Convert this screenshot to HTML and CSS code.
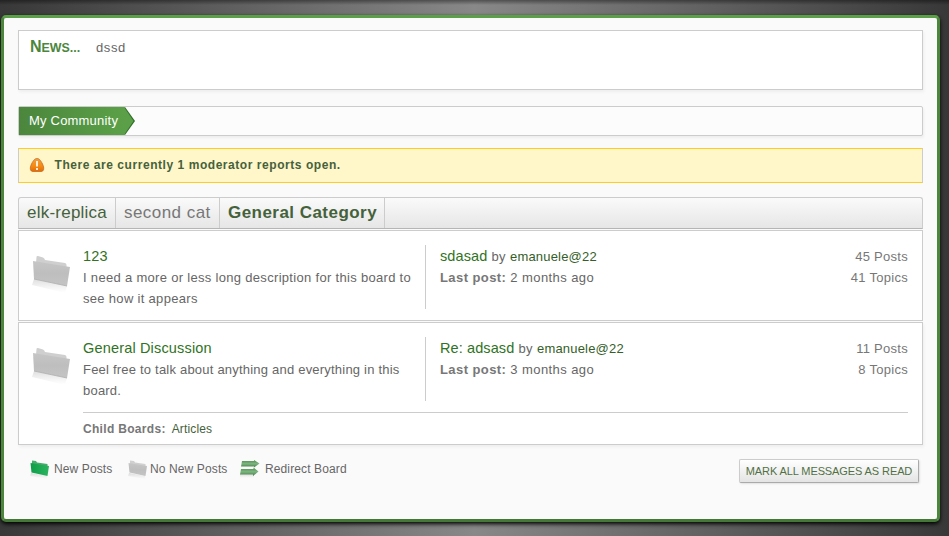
FILE: index.html
```html
<!DOCTYPE html>
<html lang="en">
<head>
<meta charset="utf-8">
<title>My Community</title>
<link rel="stylesheet" href="styles.css">
</head>
<body>
<svg class="defs" width="0" height="0" aria-hidden="true">
  <defs>
    <linearGradient id="gray" x1="0" y1="0" x2="0" y2="1"><stop offset="0" stop-color="#c6c6c6"/><stop offset=".5" stop-color="#bebebe"/><stop offset="1" stop-color="#c4c4c4"/></linearGradient>
    <linearGradient id="fade" x1="0" y1="0" x2="0" y2="1"><stop offset="0" stop-color="#aaa" stop-opacity=".4"/><stop offset="1" stop-color="#ccc" stop-opacity="0"/></linearGradient>
    <linearGradient id="green" x1="0" y1="0" x2="1" y2="0"><stop offset="0" stop-color="#0d9d48"/><stop offset="1" stop-color="#2db560"/></linearGradient>
    <linearGradient id="arrow" x1="0" y1="0" x2="0" y2="1"><stop offset="0" stop-color="#4d8a50"/><stop offset=".5" stop-color="#7db680"/><stop offset="1" stop-color="#437b47"/></linearGradient>
    <linearGradient id="orange" x1="0" y1="0" x2="0" y2="1"><stop offset="0" stop-color="#f0a040"/><stop offset=".6" stop-color="#f58a10"/><stop offset="1" stop-color="#e06a08"/></linearGradient>
    <symbol id="folder" viewBox="0 0 40 40">
      <path d="M2 24L35 31L33 38L0 30Z" fill="url(#fade)"/>
      <path d="M4 8L4.500 2Q4.500 .8 6 1L11 2.500Q12.500 3 13 5L33 8Q34.500 8.300 34.500 10V15H4Z" fill="#cfcfcf"/>
      <path d="M1 6L38 12L35 31L2 24Z" fill="url(#gray)"/>
      <path d="M2 24L35 31" stroke="#adadad" stroke-width=".8" fill="none"/>
    </symbol>
  </defs>
</svg>
<main class="wrapper">
  <section class="news"><h2>News...</h2><p>dssd</p></section>
  <nav class="crumbs">
    <a>My Community</a>
    <svg width="11" height="28" viewBox="0 0 11 28"><path d="M0 0L10 14L0 28Z" fill="#306e28"/><path d="M0 1.500L8.500 14L0 26.500Z" fill="#5ba048"/></svg>
  </nav>
  <div class="warning">
    <svg width="16" height="16" viewBox="0 0 16 16"><path d="M8 1.500C10 1.500 11.500 3 13.500 7C15.500 11 15 14.500 12 14.500H4C1 14.500 .5 11 2.500 7C4.500 3 6 1.500 8 1.500Z" fill="url(#orange)" stroke="#c66a24" stroke-width=".8"/><path d="M8 4V9.500M8 11V13" stroke="#fff" stroke-width="1.700"/></svg>
    <span>There are currently 1 moderator reports open.</span>
  </div>
  <ul class="tabs"><li>elk-replica</li><li class="muted">second cat</li><li class="active">General Category</li></ul>
  <article class="board">
    <svg class="icon" width="40" height="40"><use href="#folder"/></svg>
    <div class="info"><h3>123</h3><p>I need a more or less long description for this board to<br>see how it appears</p></div>
    <div class="latest"><p><a class="topic">sdasad</a> by <a>emanuele@22</a></p><p><b>Last post:</b> 2 months ago</p></div>
    <div class="stats"><p>45 Posts</p><p>41 Topics</p></div>
  </article>
  <article class="board second">
    <svg class="icon" width="40" height="40"><use href="#folder"/></svg>
    <div class="info"><h3>General Discussion</h3><p>Feel free to talk about anything and everything in this<br>board.</p></div>
    <div class="latest"><p><a class="topic">Re: adsasd</a> by <a>emanuele@22</a></p><p><b>Last post:</b> 3 months ago</p></div>
    <div class="stats"><p>11 Posts</p><p>8 Topics</p></div>
    <div class="children"><b>Child Boards:</b><a>Articles</a></div>
  </article>
  <footer class="legend">
    <svg class="i1" width="20" height="20" viewBox="0 0 20 20"><path d="M1 14L17 17V20L0 17Z" fill="url(#fade)"/><path d="M2 7V1.500L6 2L7 3.500L17.500 5V9Z" fill="#45ac6c"/><path d="M.5 4L19 7L17.500 17L1.500 13.500Z" fill="url(#green)"/></svg>
    <span class="l1">New Posts</span>
    <svg class="i2" width="20" height="20" viewBox="0 0 20 20"><path d="M1 14L17 17V20L0 17Z" fill="url(#fade)"/><path d="M2 7V1.500L6 2L7 3.500L17.500 5V9Z" fill="#d0d0d0"/><path d="M.5 4L19 7L17.500 17L1.500 13.500Z" fill="url(#gray)"/></svg>
    <span class="l2">No New Posts</span>
    <svg class="i3" width="20" height="20" viewBox="0 0 20 20"><path d="M0 15H14V19H0Z" fill="url(#fade)"/><path d="M2 2H14V1L19.500 4.500L14 8.500V7.500H1Z" fill="url(#arrow)"/><path d="M1 10H13.500V8.500L18.500 12.500L13 17V15.500H0Z" fill="url(#arrow)"/></svg>
    <span>Redirect Board</span>
    <a class="button">MARK ALL MESSAGES AS READ</a>
  </footer>
</main>
</body>
</html>
```
FILE: styles.css
```css
* { box-sizing: border-box; }
html { background: #3a3a3a; }
body {
  margin: 0; height: 536px; padding: 15px 9px 14px 1px; overflow: hidden;
  font: 13px/21px "Liberation Sans", Arial, sans-serif; letter-spacing: .31px; color: #666;
  background: linear-gradient(#0006, #0000 5px), linear-gradient(90deg, #383838, #888 50%, #383838);
}
h2, h3, p, ul { margin: 0; padding: 0; }
svg { display: block; flex: none; }
.defs { position: absolute; }
.wrapper {
  height: 507px; padding: 12px 14px; background: #fafafa;
  border: 3px solid #4b863c; border-top-color: #5ba048; border-bottom-color: #437837;
  border-radius: 5px; box-shadow: 0 2px 4px #000;
}
.news {
  display: flex; height: 60px; padding: 6px 11px; background: #fff;
  border: 1px solid #ccc; box-shadow: 1px 2px 3px #0000000d;
}
.news h2 { width: 66px; font-size: 12.400px; line-height: 20px; text-transform: uppercase; letter-spacing: 0; color: #4b863c; }
.news h2::first-letter { font-size: 16px; }
.news p { letter-spacing: .6px; }
.crumbs {
  display: flex; height: 30px; margin-top: 16px; background: #fcfcfc;
  border: 1px solid #ccc; border-radius: 2px; box-shadow: 1px 2px 3px #0000000d;
}
.crumbs a { width: 106px; padding-left: 10px; line-height: 27px; letter-spacing: .2px; color: #fff; background: linear-gradient(90deg, #4b863c, #5ba048); }
.warning {
  display: flex; align-items: center; height: 35px; margin-top: 12px; padding: 0 10px; gap: 9.500px;
  background: #fff6ca; border: 1px solid #ccc; border-top-color: #fc2; border-bottom-color: #fc2;
  font-size: 12px; font-weight: bold; color: #45613a; letter-spacing: .55px;
}
.warning svg { margin-top: -2px; }
.tabs {
  display: flex; height: 32px; margin-top: 14px; list-style: none;
  border: 1px solid #ccc; border-bottom-color: #b5b5b5; border-radius: 3px 3px 0 0;
  background: linear-gradient(#fafafa, #e6e6e6); font-size: 17px; line-height: 29px; letter-spacing: .23px;
}
.tabs li { width: 97px; padding-left: 8px; border-right: 1px solid #ccc; color: #45613a; white-space: nowrap; }
.tabs .muted { width: 104px; color: #777; letter-spacing: .45px; }
.tabs .active { width: 165px; font-weight: bold; letter-spacing: .46px; }
.board {
  display: grid; grid-template-columns: 64px 343px 1fr 100px; grid-template-rows: 64px auto;
  height: 91px; margin-top: 1px; padding: 14px 14px 0 0; background: #fff; border: 1px solid #ccc;
}
.second { height: 123px; box-shadow: 1px 2px 3px #0000000d; }
.icon { margin: 10px 0 0 13px; }
.info { border-right: 1px solid #ccc; white-space: nowrap; }
.info h3 { font-size: 14.500px; font-weight: normal; line-height: 22px; letter-spacing: .17px; color: #2f7323; }
.second .info p { letter-spacing: .21px; }
.latest { padding-left: 14px; letter-spacing: .42px; }
.latest p:first-child { height: 22px; line-height: 22px; }
.latest a { letter-spacing: .19px; color: #355e28; }
.latest .topic { font-size: 14.500px; letter-spacing: .1px; color: #2f7323; }
.stats { text-align: right; color: #777; padding-top: 1px; letter-spacing: .28px; }
.latest b, .children b { color: #777; }
.children {
  grid-column: 2 / -1; display: flex; height: 32px; margin-top: 11px; padding-top: 6px;
  gap: 6px; border-top: 1px solid #ccc; font-size: 12px;
}
.children a { letter-spacing: .15px; color: #45613a; }
.legend { display: flex; align-items: flex-start; padding: 14px 4px 0 12px; font-size: 12px; letter-spacing: .12px; line-height: 20px; }
.legend span { white-space: nowrap; }
.legend .l1 { width: 74px; margin-left: 4px; }
.legend .l2 { width: 90px; margin-left: 2px; }
.legend .i3 { margin-right: 5px; }
.button {
  width: 180px; height: 24px; margin-left: auto; text-align: center; line-height: 23px; font-size: 11px; letter-spacing: -.1px; color: #527044;
  background: linear-gradient(#fff, #e4e4e4); border: 1px solid #ccc; border-right-color: #aaa; border-bottom-color: #aaa;
  border-radius: 2px; box-shadow: 1px 1px 2px #0000001a; white-space: nowrap;
}
```
